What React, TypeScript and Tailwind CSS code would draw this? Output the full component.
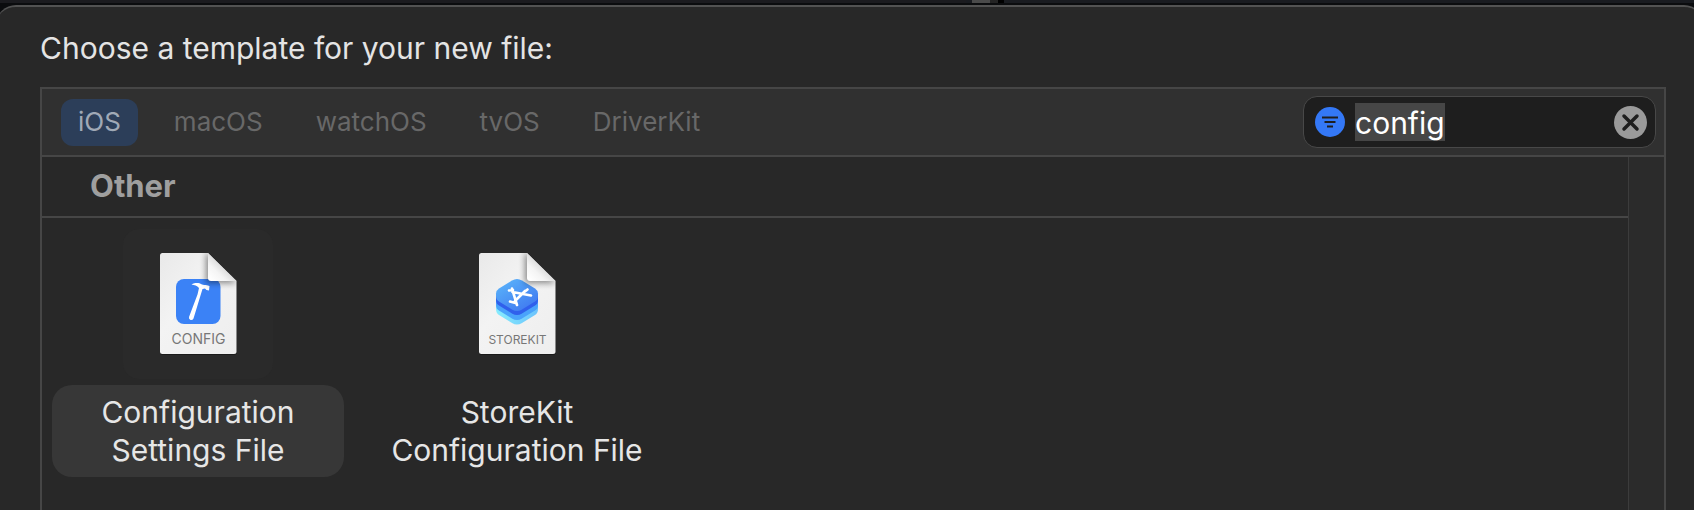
import React from "react";

interface TemplateI {
  id: string;
  lines: string[];
  icon: React.ReactNode;
}

const platforms = ["iOS", "macOS", "watchOS", "tvOS", "DriverKit"];

interface DocumentIconProps {
  label: string;
  fontSize: number;
  children: React.ReactNode;
}

const DocumentIcon = ({label, fontSize, children}: DocumentIconProps) => {
  const id = React.useId();

  return (
    <svg width="83" height="109" viewBox="-3 -3 83 109" role="img" aria-label={label}>
      <defs>
        <linearGradient id={`${id}page`} x1="0" y1="0" x2="1" y2="1">
          <stop offset="0" stopColor="#e9e9e9" />
          <stop offset="0.4" stopColor="#f3f3f3" />
          <stop offset="1" stopColor="#eeeeee" />
        </linearGradient>
        <linearGradient id={`${id}fold`} x1="0.05" y1="0.95" x2="0.5" y2="0.5">
          <stop offset="0" stopColor="#ffffff" />
          <stop offset="0.6" stopColor="#f4f4f4" />
          <stop offset="1" stopColor="#dedede" />
        </linearGradient>
        <filter id={`${id}blur`} x="-50%" y="-50%" width="200%" height="200%">
          <feGaussianBlur stdDeviation="3" />
        </filter>
        <clipPath id={`${id}clip`}>
          <path d="M2.5 0H48L76.500 28V98.500Q76.500 101 74 101H2.500Q0 101 0 98.500V2.500Q0 0 2.500 0Z" />
        </clipPath>
      </defs>
      <path
        d="M2.500 1H48L76.500 29V99.500Q76.500 102 74 102H2.500Q0 102 0 99.500V3.500Q0 1 2.500 1Z"
        fill="#000"
        opacity="0.35"
      />
      <g clipPath={`url(#${id}clip)`}>
        <rect width="77" height="101" fill={`url(#${id}page)`} />
        {children}
        <path d="M46 0V30H77L48 0Z" fill="#000" opacity="0.45" filter={`url(#${id}blur)`} />
        <path d="M48 0V25Q48 28 51 28H77V0Z" fill={`url(#${id}fold)`} />
      </g>
      <text
        x="38.500"
        y="91"
        textAnchor="middle"
        fontSize={fontSize}
        fill="#777777"
        fontFamily="Inter, sans-serif"
      >
        {label}
      </text>
    </svg>
  );
};

const ConfigIcon = () => (
  <DocumentIcon label="CONFIG" fontSize={14}>
    <rect x="16" y="26" width="44.500" height="45" rx="8" fill="#3b82f6" />
    <path
      d="M31.500 31.500C35 29.500 39 29.700 41.500 31.200C43.500 32 45 32 47 32.200L49.500 33L49 37.500L46.500 37L45 35.500L42.500 36L40.500 42.500L33.500 65.500Q32.500 67.500 30.500 67Q28.500 66 29 64L37.500 41.500L39 35C37 32.500 34.500 32 31.500 31.500Z"
      fill="#ffffff"
    />
  </DocumentIcon>
);

const StoreKitIcon = () => (
  <DocumentIcon label="STOREKIT" fontSize={12}>
    <defs>
      <linearGradient id="storekit-top" x1="0" y1="0" x2="0.8" y2="1">
        <stop offset="0" stopColor="#5cb8fb" />
        <stop offset="1" stopColor="#3f78f0" />
      </linearGradient>
      <linearGradient id="storekit-bottom" x1="0" y1="0" x2="1" y2="0">
        <stop offset="0" stopColor="#86ecfd" />
        <stop offset="1" stopColor="#6cc3fc" />
      </linearGradient>
    </defs>
    <path d="M17 50V56Q17 60 20 62L33 70Q38 73 43 70L56 62Q59 60 59 56V50Z" fill="url(#storekit-bottom)" />
    <path d="M17 47V52Q17 55.500 20 57.500L33 65.500Q38 68.500 43 65.500L56 57.500Q59 55.500 59 52V47Z" fill="#4aa3fb" />
    <path d="M17 42V47Q17 50.500 20 52.500L33 60.500Q38 63.500 43 60.500L56 52.500Q59 50.500 59 47V42Z" fill="#3060ec" />
    <path
      d="M33 27.500Q38 24.500 43 27.500L56 35.500Q59 37.500 59 40.500V43Q59 46.500 56 48.500L43 56.500Q38 59.500 33 56.500L20 48.500Q17 46.500 17 43V40.500Q17 37.500 20 35.500Z"
      fill="url(#storekit-top)"
    />
    <path
      d="M33 35.500L38 52M30 37.500L34 37M33.500 39L52 42.500M46 38L43 41L36 48M31 48.500L36.500 50M48.500 36.500L46 38.500"
      stroke="#ffffff"
      strokeWidth="2.600"
      strokeLinecap="round"
    />
  </DocumentIcon>
);

const templates: TemplateI[] = [
  {id: "config", lines: ["Configuration", "Settings File"], icon: <ConfigIcon />},
  {id: "storekit", lines: ["StoreKit", "Configuration File"], icon: <StoreKitIcon />},
];

interface PlatformTabsProps {
  active: string;
  onChange: (platform: string) => void;
}

const PlatformTabs = ({active, onChange}: PlatformTabsProps) => (
  <div role="tablist" className="flex gap-[19px]">
    {platforms.map((platform) => (
      <button
        key={platform}
        role="tab"
        aria-selected={platform === active}
        onClick={() => onChange(platform)}
        className={
          platform === active
            ? "h-[47px] px-[17px] pb-0.5 rounded-xl bg-[#2c3e59] text-[#a0a9b6]"
            : "h-[47px] px-[17px] pb-0.5 rounded-xl text-[#686868]"
        }
      >
        {platform}
      </button>
    ))}
  </div>
);

interface SearchFieldProps {
  value: string;
  onChange: (value: string) => void;
}

const SearchField = ({value, onChange}: SearchFieldProps) => (
  <div className="flex items-center w-[353px] h-13 pl-[11px] pr-2 rounded-[14px] border border-[#484848] bg-[#1e1e1e]">
    <button aria-label="Filter options" className="shrink-0">
      <svg width="30" height="30" viewBox="0 0 30 30">
        <circle cx="15" cy="15" r="15" fill="#3478f6" />
        <path d="M7 10.500H23M9.500 15H20.500M12 19.500H18" stroke="#1e1e1e" strokeWidth="2" />
      </svg>
    </button>
    <div className="flex-1 min-w-0 px-2.5">
      <input
        aria-label="Filter"
        value={value}
        onChange={(e) => onChange(e.target.value)}
        className="block field-sizing-content max-w-full h-[38px] pt-0.5 bg-[#464646] text-[30px] text-white outline-none"
      />
    </div>
    <button aria-label="Clear filter" onClick={() => onChange("")} className="shrink-0">
      <svg width="33" height="33" viewBox="0 0 33 33">
        <circle cx="16.500" cy="16.500" r="16.500" fill="#9a9a9a" />
        <path d="M10 10L23 23M23 10L10 23" stroke="#1e1e1e" strokeWidth="3.500" strokeLinecap="round" />
      </svg>
    </button>
  </div>
);

interface TemplateTileProps {
  template: TemplateI;
  isSelected: boolean;
  onSelect: (id: string) => void;
}

const TemplateTile = ({template, isSelected, onSelect}: TemplateTileProps) => (
  <button
    aria-pressed={isSelected}
    onClick={() => onSelect(template.id)}
    className="flex flex-col items-center gap-1.5 w-[292px]"
  >
    <span
      className={
        isSelected
          ? "flex items-center justify-center size-[150px] rounded-2xl bg-[#2a2a2a]"
          : "flex items-center justify-center size-[150px] rounded-2xl"
      }
    >
      {template.icon}
    </span>
    <span
      className={
        isSelected
          ? "w-full py-2 rounded-[20px] bg-[#373737] text-[30px] leading-[38px] text-[#e6e6e6]"
          : "w-full py-2 rounded-[20px] text-[30px] leading-[38px] text-[#e6e6e6]"
      }
    >
      {template.lines.map((line) => (
        <span key={line} className="block">{line}</span>
      ))}
    </span>
  </button>
);

export default function App() {
  const [platform, setPlatform] = React.useState("iOS");
  const [search, setSearch] = React.useState("config");
  const [selectedId, setSelectedId] = React.useState("config");

  return (
    <div className="flex flex-col h-screen overflow-hidden bg-[#0b0c0e] font-[Inter,sans-serif]">
      <div className="flex shrink-0 h-[3px] mb-0.5 bg-[#191b20]">
        <div className="w-[57%] bg-[#1b1b1f]" />
        <div className="w-[18px] ml-1.5 bg-[#4a4a4a]" />
        <div className="w-2 bg-[#242424]" />
        <div className="w-1.5 bg-black" />
      </div>
      <main className="flex flex-col flex-1 min-h-0 -ml-1 -mr-2.5 pl-11 pr-[38px] rounded-t-[20px] border-t-2 border-[#525252] bg-[#282828]">
        <h1 className="pt-[21px] pb-[19px] text-[30px] leading-10 text-[#e4e4e4]">
          Choose a template for your new file:
        </h1>
        <section className="flex flex-col flex-1 min-h-0 border-2 border-b-0 border-[#464646]">
          <div className="flex items-center justify-between shrink-0 h-17 pl-[19px] pr-2 border-b-2 border-[#464646] bg-[#303030] text-[26px]">
            <PlatformTabs active={platform} onChange={setPlatform} />
            <SearchField value={search} onChange={setSearch} />
          </div>
          <div className="flex flex-1 min-h-0">
            <div className="flex-1 min-w-0 overflow-hidden">
              <h2 className="h-[61px] pl-12 border-b-2 border-[#464646] text-[31px] leading-[58px] font-bold text-[#9f9f9f]">
                Other
              </h2>
              <div className="flex flex-wrap gap-[27px] pl-2.5 pt-[11px]">
                {templates.map((template) => (
                  <TemplateTile
                    key={template.id}
                    template={template}
                    isSelected={template.id === selectedId}
                    onSelect={setSelectedId}
                  />
                ))}
              </div>
            </div>
            <div className="w-9 border-l border-[#3c3c3c] bg-[#2b2b2b]" />
          </div>
        </section>
      </main>
    </div>
  );
}
